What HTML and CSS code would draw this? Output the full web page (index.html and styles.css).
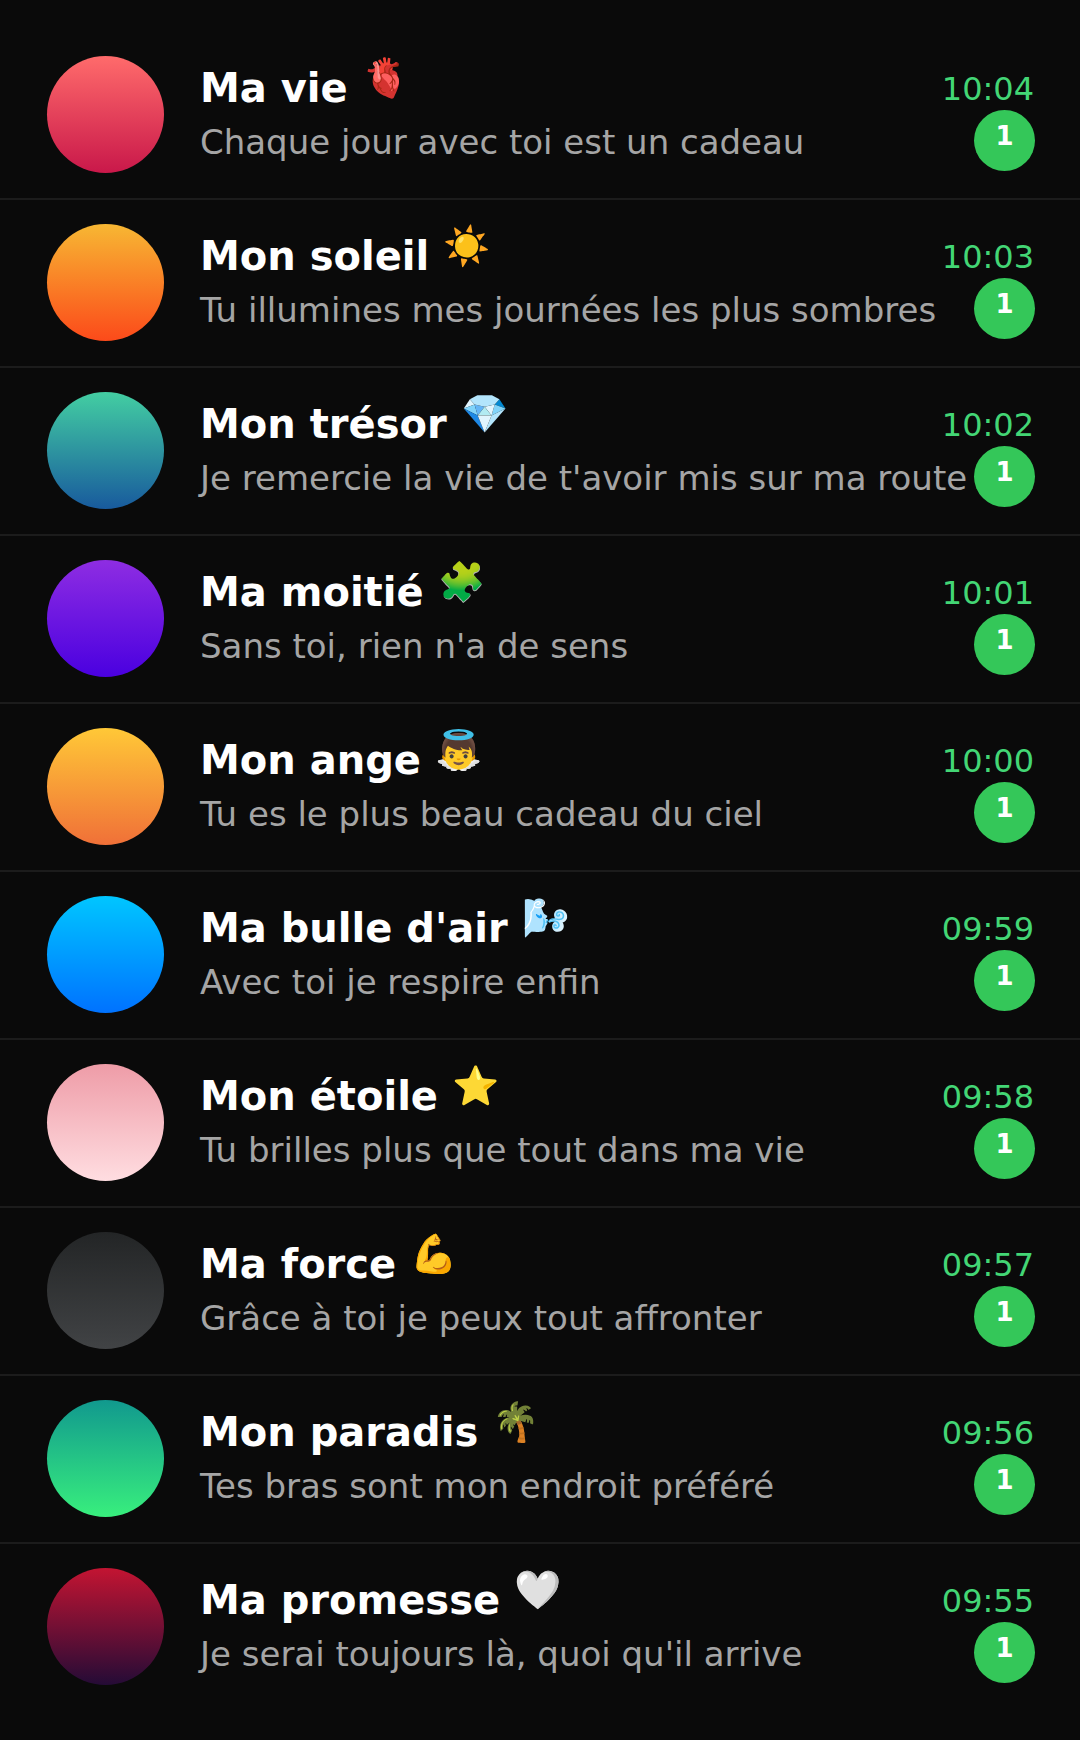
FILE: index.html
```
<!DOCTYPE html>
<html lang="fr">
<head>
    <meta charset="UTF-8">
    <meta name="viewport" content="width=device-width, initial-scale=1.0">
    <title>Messages</title>
    <link rel="stylesheet" href="styles.css">
</head>
<body>
    <ul class="chat-list">
        <li class="chat">
            <div class="avatar vie"></div>
            <div class="chat-body">
                <div class="chat-head">
                    <h2 class="name">Ma vie</h2>
                    <span class="emoji">🫀</span>
                    <time class="time">10:04</time>
                </div>
                <div class="chat-foot">
                    <p class="preview">Chaque jour avec toi est un cadeau</p>
                    <span class="badge">1</span>
                </div>
            </div>
        </li>
        <li class="chat">
            <div class="avatar soleil"></div>
            <div class="chat-body">
                <div class="chat-head">
                    <h2 class="name">Mon soleil</h2>
                    <span class="emoji">☀️</span>
                    <time class="time">10:03</time>
                </div>
                <div class="chat-foot">
                    <p class="preview">Tu illumines mes journées les plus sombres</p>
                    <span class="badge">1</span>
                </div>
            </div>
        </li>
        <li class="chat">
            <div class="avatar tresor"></div>
            <div class="chat-body">
                <div class="chat-head">
                    <h2 class="name">Mon trésor</h2>
                    <span class="emoji">💎</span>
                    <time class="time">10:02</time>
                </div>
                <div class="chat-foot">
                    <p class="preview">Je remercie la vie de t'avoir mis sur ma route</p>
                    <span class="badge">1</span>
                </div>
            </div>
        </li>
        <li class="chat">
            <div class="avatar moitie"></div>
            <div class="chat-body">
                <div class="chat-head">
                    <h2 class="name">Ma moitié</h2>
                    <span class="emoji">🧩</span>
                    <time class="time">10:01</time>
                </div>
                <div class="chat-foot">
                    <p class="preview">Sans toi, rien n'a de sens</p>
                    <span class="badge">1</span>
                </div>
            </div>
        </li>
        <li class="chat">
            <div class="avatar ange"></div>
            <div class="chat-body">
                <div class="chat-head">
                    <h2 class="name">Mon ange</h2>
                    <span class="emoji">👼</span>
                    <time class="time">10:00</time>
                </div>
                <div class="chat-foot">
                    <p class="preview">Tu es le plus beau cadeau du ciel</p>
                    <span class="badge">1</span>
                </div>
            </div>
        </li>
        <li class="chat">
            <div class="avatar bulle"></div>
            <div class="chat-body">
                <div class="chat-head">
                    <h2 class="name">Ma bulle d'air</h2>
                    <span class="emoji">🌬️</span>
                    <time class="time">09:59</time>
                </div>
                <div class="chat-foot">
                    <p class="preview">Avec toi je respire enfin</p>
                    <span class="badge">1</span>
                </div>
            </div>
        </li>
        <li class="chat">
            <div class="avatar etoile"></div>
            <div class="chat-body">
                <div class="chat-head">
                    <h2 class="name">Mon étoile</h2>
                    <span class="emoji">⭐</span>
                    <time class="time">09:58</time>
                </div>
                <div class="chat-foot">
                    <p class="preview">Tu brilles plus que tout dans ma vie</p>
                    <span class="badge">1</span>
                </div>
            </div>
        </li>
        <li class="chat">
            <div class="avatar force"></div>
            <div class="chat-body">
                <div class="chat-head">
                    <h2 class="name">Ma force</h2>
                    <span class="emoji">💪</span>
                    <time class="time">09:57</time>
                </div>
                <div class="chat-foot">
                    <p class="preview">Grâce à toi je peux tout affronter</p>
                    <span class="badge">1</span>
                </div>
            </div>
        </li>
        <li class="chat">
            <div class="avatar paradis"></div>
            <div class="chat-body">
                <div class="chat-head">
                    <h2 class="name">Mon paradis</h2>
                    <span class="emoji">🌴</span>
                    <time class="time">09:56</time>
                </div>
                <div class="chat-foot">
                    <p class="preview">Tes bras sont mon endroit préféré</p>
                    <span class="badge">1</span>
                </div>
            </div>
        </li>
        <li class="chat">
            <div class="avatar promesse"></div>
            <div class="chat-body">
                <div class="chat-head">
                    <h2 class="name">Ma promesse</h2>
                    <span class="emoji">🤍</span>
                    <time class="time">09:55</time>
                </div>
                <div class="chat-foot">
                    <p class="preview">Je serai toujours là, quoi qu'il arrive</p>
                    <span class="badge">1</span>
                </div>
            </div>
        </li>
    </ul>
</body>
</html>
```
FILE: styles.css
```
* {
    box-sizing: border-box;
    margin: 0;
    padding: 0;
}
body {
    background: #0a0a0a;
    color: #fff;
    font-family: "DejaVu Sans", sans-serif;
}
.chat-list {
    list-style: none;
    padding: 32px 0 28px;
}
.chat {
    display: flex;
    gap: 36px;
    padding: 24px 45px 25px 47px;
    border-bottom: 2px solid #1c1c1c;
}
.chat:last-child {
    border-bottom: none;
}
.avatar {
    flex: none;
    width: 117px;
    height: 117px;
    border-radius: 50%;
}
.chat-body {
    flex: 1;
    min-width: 0;
}
.chat-head {
    display: flex;
    height: 54px;
}
.name {
    padding-top: 9px;
    font-size: 40px;
    font-weight: bold;
    line-height: 46px;
}
.emoji {
    margin-left: 14px;
    font-size: 38px;
    line-height: 45px;
}
.time {
    margin-left: auto;
    padding: 10px 1px 0 0;
    font-size: 32px;
    line-height: 46px;
    color: #43d675;
}
.chat-foot {
    display: flex;
    justify-content: space-between;
}
.preview {
    padding-top: 8px;
    font-size: 34px;
    line-height: 48px;
    color: #a5a5a5;
    white-space: nowrap;
}
.badge {
    flex: none;
    width: 61px;
    height: 61px;
    border-radius: 50%;
    background: #34c759;
    font-size: 26px;
    font-weight: bold;
    line-height: 52px;
    text-align: center;
}

/* avatars */
.vie { background: linear-gradient(#ff6b6b, #c9184a); }
.soleil { background: linear-gradient(#f7b733, #fc4a1a); }
.tresor { background: linear-gradient(#43cea2, #185a9d); }
.moitie { background: linear-gradient(#8e2de2, #4a00e0); }
.ange { background: linear-gradient(#ffc837, #f07038); }
.bulle { background: linear-gradient(#00c6ff, #0072ff); }
.etoile { background: linear-gradient(#ee9ca7, #ffdde1); }
.force { background: linear-gradient(#232526, #414345); }
.paradis { background: linear-gradient(#11998e, #38ef7d); }
.promesse { background: linear-gradient(#c31432, #240b36); }
```
